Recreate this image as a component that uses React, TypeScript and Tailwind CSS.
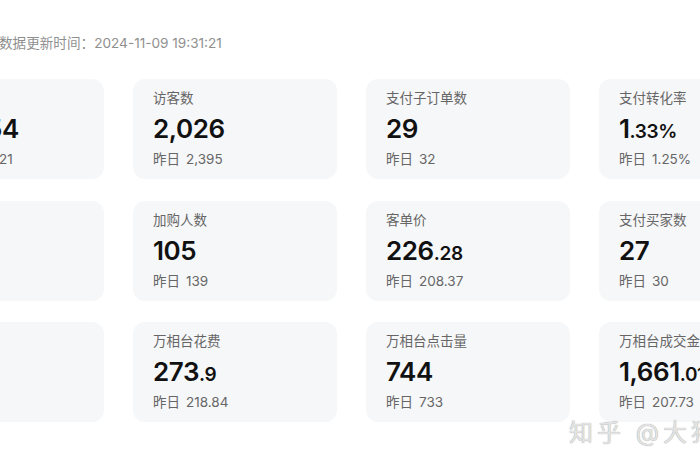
// Data overview cards — store dashboard snapshot

type Metric = {
  label: string;
  value: string;
  decimal?: string;
  yesterday: string;
};

const METRICS: Metric[] = [
  { label: '支付金额', value: '105,854', yesterday: '15,842.21' },
  { label: '访客数', value: '2,026', yesterday: '2,395' },
  { label: '支付子订单数', value: '29', yesterday: '32' },
  { label: '支付转化率', value: '1', decimal: '.33%', yesterday: '1.25%' },
  { label: '加购件数', value: '', yesterday: '' },
  { label: '加购人数', value: '105', yesterday: '139' },
  { label: '客单价', value: '226', decimal: '.28', yesterday: '208.37' },
  { label: '支付买家数', value: '27', yesterday: '30' },
  { label: '收藏人数', value: '', yesterday: '' },
  { label: '万相台花费', value: '273', decimal: '.9', yesterday: '218.84' },
  { label: '万相台点击量', value: '744', yesterday: '733' },
  { label: '万相台成交金额', value: '1,661', decimal: '.01', yesterday: '207.73' },
];

function MetricCard({ m }: { m: Metric }) {
  return (
    <div className="h-[100px] rounded-[12px] bg-[#f6f7f9] px-[20px] pt-[10px] overflow-hidden whitespace-nowrap">
      <div className="text-[13.5px] leading-[18px] text-[#666]">{m.value ? m.label : ''}</div>
      <div className="mt-[7px] h-[30px] leading-[30px] text-[#111] font-semibold tracking-[-0.4px]">
        <span className="text-[26px]">{m.value}</span>
        {m.decimal && <span className="text-[19px]">{m.decimal}</span>}
      </div>
      <div className="mt-[6px] text-[13.5px] leading-[18px] text-[#666]">
        {m.yesterday && (
          <>
            昨日<span className="ml-[6px]">{m.yesterday}</span>
          </>
        )}
      </div>
    </div>
  );
}

export default function App() {
  return (
    <div
      className="relative w-[700px] h-[470px] overflow-hidden bg-white"
      style={{ fontFamily: 'Inter, "Noto Sans CJK SC", sans-serif' }}
    >
      {/* Header */}
      <div className="pt-[34px] h-[79px] text-[13.6px] leading-[18px] text-[#8f8f8f] ml-[-1px] whitespace-nowrap">
        数据更新时间：2024-11-09 19:31:21
      </div>

      {/* Cards grid */}
      <div className="ml-[-100px] grid grid-cols-[repeat(4,204px)] gap-x-[29px] gap-y-[21.5px]">
        {METRICS.map((m, i) => (
          <MetricCard key={i} m={m} />
        ))}
      </div>

      {/* Watermark */}
      <div className="absolute left-[569px] top-[419px] text-[24px] leading-[28px] tracking-[4px] text-[#e4e4e4] whitespace-nowrap [text-shadow:0_0_1px_#8a8a8a]">
        知乎 @大猪蹄子
      </div>
    </div>
  );
}
